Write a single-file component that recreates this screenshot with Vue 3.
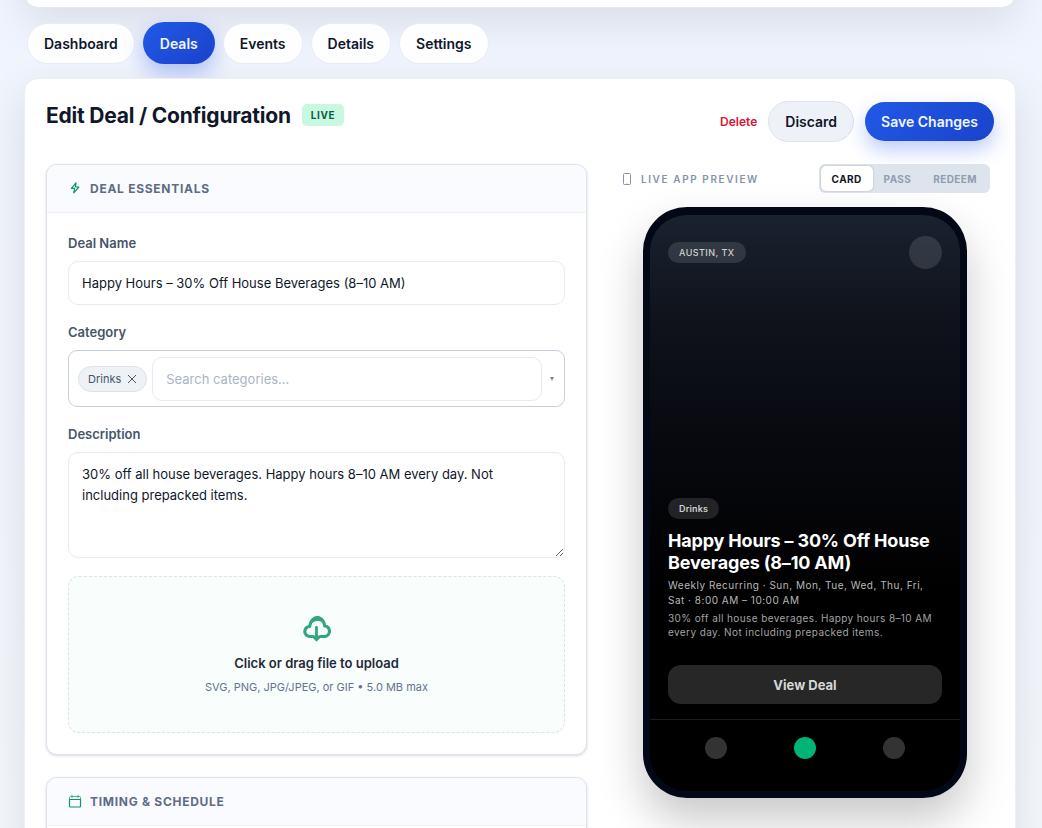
<script setup>
import { ref } from 'vue'

const tabs = ['Dashboard', 'Deals', 'Events', 'Details', 'Settings']
const activeTab = ref('Deals')
const previewModes = ['Card', 'Pass', 'Redeem']
const previewMode = ref('Card')
const dealName = ref('Happy Hours – 30% Off House Beverages (8–10 AM)')
const description = ref('30% off all house beverages. Happy hours 8–10 AM every day. Not including prepacked items.')
const categories = ref(['Drinks'])
const query = ref('')

function removeCategory(name) {
  categories.value = categories.value.filter((c) => c !== name)
}
</script>

<template>
  <div class="page">
    <header class="top-card"></header>

    <nav class="tabs">
      <button
        v-for="tab in tabs"
        :key="tab"
        type="button"
        class="tab"
        :class="{ active: tab === activeTab }"
        @click="activeTab = tab"
      >{{ tab }}</button>
    </nav>

    <main class="editor">
      <div class="editor-head">
        <div class="heading">
          <h1>Edit Deal / Configuration</h1>
          <span class="badge">LIVE</span>
        </div>
        <div class="actions">
          <button type="button" class="delete">Delete</button>
          <button type="button" class="discard">Discard</button>
          <button type="button" class="save">Save Changes</button>
        </div>
      </div>

      <div class="columns">
        <div class="forms">
          <section class="panel">
            <h2 class="panel-head">
              <svg class="panel-icon" viewBox="0 0 14 14" fill="none" stroke="currentColor" stroke-width="1.2" stroke-linejoin="round">
                <path d="M8 1.800 3.400 7.400h3.200L5.800 11.800l5-5.800H7.400z" />
              </svg>
              DEAL ESSENTIALS
            </h2>
            <div class="panel-body">
              <div class="field">
                <label for="deal-name">Deal Name</label>
                <input id="deal-name" v-model="dealName" class="input" type="text" />
              </div>
              <div class="field">
                <label for="category">Category</label>
                <div class="combo">
                  <span v-for="c in categories" :key="c" class="chip">
                    {{ c }}
                    <button type="button" class="chip-remove" :aria-label="'Remove ' + c" @click="removeCategory(c)">
                      <svg viewBox="0 0 10 10" fill="none" stroke="currentColor"><path d="M1 1l8 8M9 1l-8 8" /></svg>
                    </button>
                  </span>
                  <input id="category" v-model="query" class="input" type="text" placeholder="Search categories..." />
                  <button type="button" class="caret" aria-label="Show categories">
                    <svg viewBox="0 0 4 4" fill="currentColor"><path d="M0 0h4L2 4z" /></svg>
                  </button>
                </div>
              </div>
              <div class="field">
                <label for="description">Description</label>
                <textarea id="description" v-model="description" class="input area"></textarea>
              </div>
              <button type="button" class="upload">
                <svg class="cloud" viewBox="-1 0 30 27" fill="none" stroke="currentColor" stroke-linecap="round" stroke-linejoin="round">
                  <path d="M9 21.500H7A5 5 0 0 1 6.600 11.500C7.300 6 10.500 2.500 14.300 2.500S21 5.800 21.600 10.800A5.400 5.400 0 0 1 22 21.500H18" stroke-width="3.200" />
                  <path d="M8.500 8C9.500 3.500 12 1.500 14.300 1.500S19.500 3.500 20.300 8C18.500 6.300 17 5.500 14.600 5.500S10.500 6.300 8.500 8z" fill="currentColor" stroke-width="1" />
                  <path d="M13.500 12.500v11" stroke-width="2.800" />
                  <path d="M9 20.800l4.500 4.700 4.500-4.700-4.500 1z" fill="currentColor" stroke-width="1.800" />
                </svg>
                <span class="upload-title">Click or drag file to upload</span>
                <span class="upload-hint">SVG, PNG, JPG/JPEG, or GIF • 5.0 MB max</span>
              </button>
            </div>
          </section>

          <section class="panel">
            <h2 class="panel-head">
              <svg class="panel-icon" viewBox="0 0 14 14" fill="none" stroke="currentColor" stroke-linejoin="round">
                <path d="M1.500 5.500v6.500a1 1 0 0 0 1 1h9a1 1 0 0 0 1-1V5.500z" stroke-width="1.200" />
                <path d="M1.500 5.500V3.500a1 1 0 0 1 1-1h9a1 1 0 0 1 1 1v2M4 0.800v3M10 0.800v3" opacity="0.700" />
              </svg>
              TIMING &amp; SCHEDULE
            </h2>
            <div class="panel-body"></div>
          </section>
        </div>

        <aside class="preview">
          <div class="preview-head">
            <h2 class="preview-title">
              <svg viewBox="0 0 10 12" fill="none" stroke="currentColor"><rect x="1.500" y="0.500" width="7" height="11" rx="1" /><path d="M4.500 10.300h1" stroke-width="0.500" /></svg>
              LIVE APP PREVIEW
            </h2>
            <div class="modes">
              <button
                v-for="m in previewModes"
                :key="m"
                type="button"
                class="mode"
                :class="{ on: m === previewMode }"
                @click="previewMode = m"
              >{{ m.toUpperCase() }}</button>
            </div>
          </div>

          <div class="phone">
            <div class="screen">
              <div class="screen-top">
                <span class="pill place">AUSTIN, TX</span>
                <span class="avatar"></span>
              </div>
              <div class="deal">
                <span class="pill">Drinks</span>
                <h3>{{ dealName }}</h3>
                <p class="when">Weekly Recurring · Sun, Mon, Tue, Wed, Thu, Fri, Sat · 8:00 AM – 10:00 AM</p>
                <p class="about">{{ description }}</p>
                <button type="button" class="view">View Deal</button>
              </div>
            </div>
            <div class="dock"><i></i><i class="current"></i><i></i></div>
          </div>
        </aside>
      </div>
    </main>
  </div>
</template>

<style>
body {
  background: #f1f5f9;
}
</style>

<style scoped>
.page,
.page * {
  box-sizing: border-box;
}

.page {
  display: flow-root;
  height: 100vh;
  overflow: hidden;
  padding: 0 26px 0 24px;
  background: linear-gradient(180deg, #f0f4fe 0%, #f1f4fb 50%, #f3f6fa 100%);
  color: #0f172a;
  font-family: Inter, "Liberation Sans", sans-serif;
}

button,
input,
textarea {
  margin: 0;
  font-family: inherit;
}

button {
  padding: 0;
  border: 0;
  background: none;
  cursor: pointer;
}

h1,
h2,
h3,
p {
  margin: 0;
}

.top-card {
  height: 88px;
  margin-top: -80px;
  border: 1px solid #e5e8ee;
  border-radius: 14px;
  background: #fff;
  box-shadow: 0 14px 44px rgba(15, 23, 42, 0.1);
}

.tabs {
  position: relative;
  display: flex;
  align-items: center;
  gap: 8px;
  height: 70px;
  padding: 0 3px;
}

.tab {
  height: 41px;
  padding: 0 16px;
  border: 1px solid #e9ecf1;
  border-radius: 21px;
  background: rgba(255, 255, 255, 0.92);
  color: #0f172a;
  font-size: 14px;
  font-weight: 600;
}

.tab.active {
  height: 42px;
  padding: 0 17px;
  border: 0;
  background: linear-gradient(135deg, #2159e6, #1a43cb);
  box-shadow: 0 9px 20px rgba(37, 85, 235, 0.32);
  color: #f1f5ff;
}

.editor {
  position: relative;
  min-height: 900px;
  padding: 21px 21px;
  border: 1px solid #eceef3;
  border-radius: 14px;
  background: #fff;
  box-shadow: 0 14px 44px rgba(15, 23, 42, 0.1);
}

.editor-head {
  display: flex;
  align-items: flex-start;
  justify-content: space-between;
  height: 64px;
}

.heading {
  display: flex;
  align-items: center;
  gap: 11px;
  height: 30px;
}

h1 {
  font-size: 21px;
  font-weight: 700;
  letter-spacing: -0.01em;
}

.badge {
  padding: 0 9px;
  border-radius: 5px;
  background: #c9f8e0;
  color: #066046;
  font-size: 10px;
  font-weight: 700;
  letter-spacing: 0.06em;
  line-height: 22px;
}

.actions {
  display: flex;
  align-items: center;
  gap: 11px;
  padding-top: 1px;
}

.delete {
  color: #dc1430;
  font-size: 12px;
  font-weight: 600;
}

.discard {
  height: 41px;
  padding: 0 16px;
  border: 1px solid #dde3ea;
  border-radius: 21px;
  background: #eef2f8;
  color: #0f172a;
  font-size: 14px;
  font-weight: 600;
}

.save {
  height: 39px;
  padding: 0 16px;
  border-radius: 20px;
  background: linear-gradient(135deg, #2159e6, #1a43cb);
  box-shadow: 0 9px 20px rgba(37, 85, 235, 0.3);
  color: #f1f5ff;
  font-size: 14px;
  font-weight: 600;
}

.columns {
  display: grid;
  grid-template-columns: minmax(0, 1fr) 370px;
  gap: 33px;
  align-items: start;
  padding-right: 4px;
}

.forms {
  display: grid;
  gap: 22px;
}

.panel {
  overflow: hidden;
  border: 1px solid #dce2ec;
  border-radius: 11px;
  background: #fff;
  box-shadow: 0 1px 3px rgba(30, 50, 100, 0.18);
}

.panel-head {
  display: flex;
  align-items: center;
  gap: 8px;
  height: 48px;
  padding: 0 21px 1px;
  border-bottom: 1px solid #eef1f7;
  background: #fafbfe;
  color: #5d6d86;
  font-size: 12px;
  font-weight: 700;
  letter-spacing: 0.06em;
}

.panel-icon {
  width: 14px;
  height: 14px;
  color: #059669;
}

.panel-body {
  display: grid;
  gap: 18px;
  padding: 21px;
}

.field {
  display: grid;
  gap: 9px;
}

.field label {
  color: #475569;
  font-size: 13px;
  font-weight: 600;
  line-height: 18px;
}

.input {
  display: block;
  width: 100%;
  min-width: 0;
  height: 44px;
  padding: 0 13px;
  border: 1px solid #e8eaee;
  border-radius: 10px;
  background: #fff;
  color: #0f172a;
  font-size: 13px;
}

.input::placeholder {
  color: #a9b5c6;
}

.area {
  height: 106px;
  padding: 11px 13px;
  line-height: 21px;
  resize: vertical;
}

.combo {
  display: flex;
  align-items: center;
  gap: 5px;
  height: 57px;
  padding: 0 10px 0 9px;
  border: 1px solid #c8cfdc;
  border-radius: 9px;
}

.combo .input {
  flex: 1;
}

.chip {
  display: flex;
  align-items: center;
  gap: 6px;
  height: 26px;
  padding: 0 9px;
  border: 1px solid #dce2ea;
  border-radius: 13px;
  background: #eef2f7;
  color: #475569;
  font-size: 11px;
}

.chip-remove {
  display: flex;
  color: #475569;
}

.chip-remove svg {
  width: 10px;
  height: 10px;
}

.caret {
  display: flex;
  padding: 0 0 0 3px;
  color: #7b899e;
}

.caret svg {
  width: 4px;
  height: 4px;
}

.upload {
  display: flex;
  flex-direction: column;
  align-items: center;
  justify-content: center;
  height: 157px;
  border: 1px dashed #d7e4e8;
  border-radius: 11px;
  background: #f9fdfc;
}

.cloud {
  width: 30px;
  height: 27px;
  color: #32a67c;
}

.upload-title {
  margin-top: 12px;
  color: #1e293b;
  font-size: 13px;
  font-weight: 600;
  line-height: 18px;
}

.upload-hint {
  margin-top: 7px;
  color: #64748b;
  font-size: 11px;
  line-height: 16px;
}

.preview-head {
  display: flex;
  align-items: center;
  justify-content: space-between;
}

.preview-title {
  display: flex;
  align-items: center;
  gap: 9px;
  padding-left: 2px;
  color: #8594ab;
  font-size: 10px;
  font-weight: 600;
  letter-spacing: 0.16em;
}

.preview-title svg {
  width: 10px;
  height: 12px;
}

.modes {
  display: flex;
  padding: 2px;
  border-radius: 6px;
  background: #dee4ee;
}

.mode {
  height: 25px;
  padding: 0 11px;
  border-radius: 5px;
  color: #909db0;
  font-size: 10px;
  font-weight: 700;
  letter-spacing: 0.04em;
}

.mode.on {
  background: #fff;
  box-shadow: 0 0 2px rgba(15, 23, 42, 0.25);
  color: #0f172a;
}

.phone {
  display: flex;
  flex-direction: column;
  width: 324px;
  height: 591px;
  margin: 14px auto 0;
  overflow: hidden;
  border: 7px solid #030816;
  border-top-width: 8px;
  border-radius: 44px;
  background: #000;
  box-shadow: 0 22px 45px rgba(0, 0, 0, 0.22);
}

.screen {
  display: flex;
  flex: 1;
  flex-direction: column;
  justify-content: space-between;
  padding: 21px 18px 15px;
  background: linear-gradient(180deg, #192230 0%, #10131c 20%, #08090f 45%, #000 75%);
}

.screen-top {
  display: flex;
  align-items: center;
  justify-content: space-between;
}

.pill {
  padding: 0 11px;
  border-radius: 11px;
  background: rgba(255, 255, 255, 0.12);
  color: #cfd0d2;
  font-size: 9px;
  font-weight: 600;
  letter-spacing: 0.02em;
  line-height: 21px;
}

.place {
  font-weight: 500;
  letter-spacing: 0.05em;
}

.avatar {
  width: 33px;
  height: 33px;
  border-radius: 50%;
  background: rgba(255, 255, 255, 0.12);
}

.deal {
  display: flex;
  flex-direction: column;
  align-items: flex-start;
}

h3 {
  margin-top: 11px;
  color: #fff;
  font-size: 18px;
  font-weight: 700;
  letter-spacing: -0.01em;
  line-height: 22px;
}

.when {
  margin-top: 4px;
  color: #b8b8b8;
  font-size: 10px;
  letter-spacing: 0.05em;
  line-height: 15px;
}

.about {
  margin-top: 3px;
  color: #a3a3a3;
  font-size: 10px;
  letter-spacing: 0.04em;
  line-height: 14px;
}

.view {
  width: 100%;
  height: 39px;
  margin-top: 26px;
  border-radius: 13px;
  background: #272727;
  color: #d6d6d6;
  font-size: 13px;
  font-weight: 700;
}

.dock {
  display: flex;
  justify-content: space-around;
  height: 72px;
  padding: 17px 22px;
  border-top: 1px solid #1c1c1c;
}

.dock i {
  width: 22px;
  height: 22px;
  border-radius: 50%;
  background: #333;
}

.dock .current {
  background: #00b478;
}
</style>
